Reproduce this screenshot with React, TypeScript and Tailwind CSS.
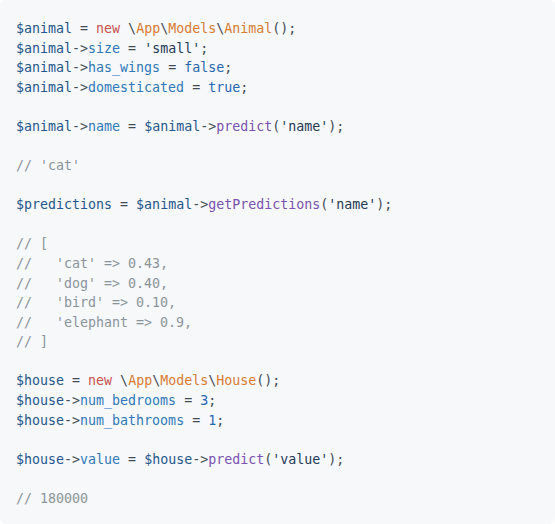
import React from 'react';

type Tok = [string, string];

const C = {
  v: 'text-[#25578c]',
  p: 'text-[#3178b9]',
  k: 'text-[#c9524f]',
  c: 'text-[#d87c34]',
  f: 'text-[#7b52b0]',
  s: 'text-[#243a57]',
  n: 'text-[#2766b0]',
  m: 'text-[#8b949d]',
  o: 'text-[#424b55]',
};

const lines: Tok[][] = [
  [['v', '$animal'], ['o', ' = '], ['k', 'new'], ['o', ' \\'], ['c', 'App'], ['o', '\\'], ['c', 'Models'], ['o', '\\'], ['c', 'Animal'], ['o', '();']],
  [['v', '$animal'], ['o', '->'], ['p', 'size'], ['o', ' = '], ['s', "'small'"], ['o', ';']],
  [['v', '$animal'], ['o', '->'], ['p', 'has_wings'], ['o', ' = '], ['n', 'false'], ['o', ';']],
  [['v', '$animal'], ['o', '->'], ['p', 'domesticated'], ['o', ' = '], ['n', 'true'], ['o', ';']],
  [],
  [['v', '$animal'], ['o', '->'], ['p', 'name'], ['o', ' = '], ['v', '$animal'], ['o', '->'], ['f', 'predict'], ['o', '('], ['s', "'name'"], ['o', ');']],
  [],
  [['m', "// 'cat'"]],
  [],
  [['v', '$predictions'], ['o', ' = '], ['v', '$animal'], ['o', '->'], ['f', 'getPredictions'], ['o', '('], ['s', "'name'"], ['o', ');']],
  [],
  [['m', '// [']],
  [['m', "//   'cat' => 0.43,"]],
  [['m', "//   'dog' => 0.40,"]],
  [['m', "//   'bird' => 0.10,"]],
  [['m', "//   'elephant => 0.9,"]],
  [['m', '// ]']],
  [],
  [['v', '$house'], ['o', ' = '], ['k', 'new'], ['o', ' \\'], ['c', 'App'], ['o', '\\'], ['c', 'Models'], ['o', '\\'], ['c', 'House'], ['o', '();']],
  [['v', '$house'], ['o', '->'], ['p', 'num_bedrooms'], ['o', ' = '], ['n', '3'], ['o', ';']],
  [['v', '$house'], ['o', '->'], ['p', 'num_bathrooms'], ['o', ' = '], ['n', '1'], ['o', ';']],
  [],
  [['v', '$house'], ['o', '->'], ['p', 'value'], ['o', ' = '], ['v', '$house'], ['o', '->'], ['f', 'predict'], ['o', '('], ['s', "'value'"], ['o', ');']],
  [],
  [['m', '// 180000']],
];

export default function App() {
  return (
    <div className="w-[555px] h-[524px] bg-white">
      <pre className="h-full rounded-md bg-[#f6f8fa] pl-4 pr-4 pt-[19px] pb-[15px] font-['DejaVu_Sans_Mono',monospace] text-[13.3px] leading-[19.58px] text-[#424b55] overflow-hidden">
        {lines.map((line, i) => (
          <div key={i} className="h-[19.58px] whitespace-pre">
            {line.map(([t, txt], j) => (
              <span key={j} className={C[t as keyof typeof C]}>
                {txt}
              </span>
            ))}
          </div>
        ))}
      </pre>
    </div>
  );
}
